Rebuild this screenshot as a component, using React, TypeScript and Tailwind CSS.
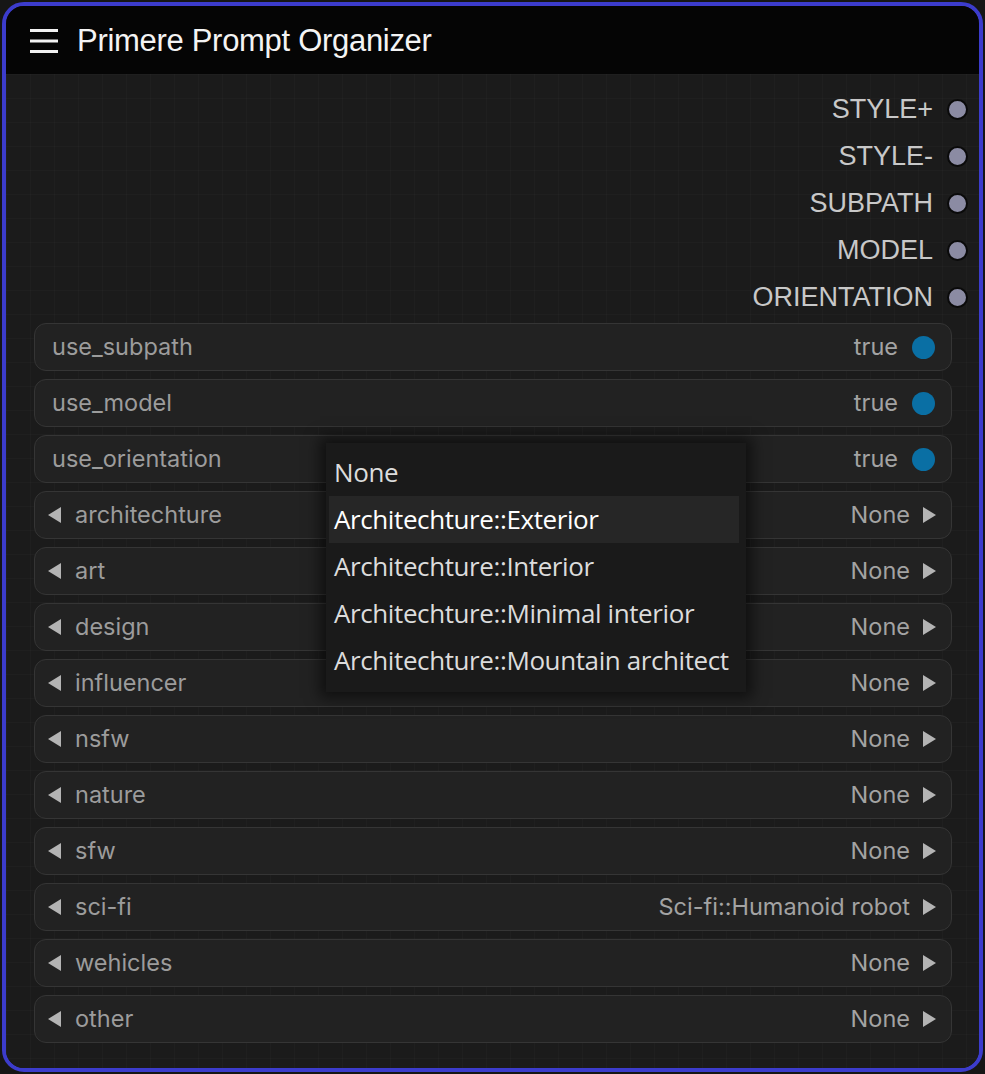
import React from 'react';

type Widget =
  | { kind: 'toggle'; name: string; value: string }
  | { kind: 'combo'; name: string; value: string };

const outputs = ['STYLE+', 'STYLE-', 'SUBPATH', 'MODEL', 'ORIENTATION'];

const widgets: Widget[] = [
  { kind: 'toggle', name: 'use_subpath', value: 'true' },
  { kind: 'toggle', name: 'use_model', value: 'true' },
  { kind: 'toggle', name: 'use_orientation', value: 'true' },
  { kind: 'combo', name: 'architechture', value: 'None' },
  { kind: 'combo', name: 'art', value: 'None' },
  { kind: 'combo', name: 'design', value: 'None' },
  { kind: 'combo', name: 'influencer', value: 'None' },
  { kind: 'combo', name: 'nsfw', value: 'None' },
  { kind: 'combo', name: 'nature', value: 'None' },
  { kind: 'combo', name: 'sfw', value: 'None' },
  { kind: 'combo', name: 'sci-fi', value: 'Sci-fi::Humanoid robot' },
  { kind: 'combo', name: 'wehicles', value: 'None' },
  { kind: 'combo', name: 'other', value: 'None' },
];

const menuItems = [
  'None',
  'Architechture::Exterior',
  'Architechture::Interior',
  'Architechture::Minimal interior',
  'Architechture::Mountain architect',
];

function Arrow({ dir }: { dir: 'left' | 'right' }) {
  return (
    <svg width="14" height="16" viewBox="0 0 14 16" className="shrink-0">
      {dir === 'left' ? (
        <polygon points="13,0 13,16 0,8" fill="#b4b4b4" />
      ) : (
        <polygon points="1,0 1,16 14,8" fill="#b4b4b4" />
      )}
    </svg>
  );
}

function WidgetRow({ w }: { w: Widget }) {
  return (
    <div className="h-[48px] rounded-[12px] border border-[#353535] bg-[#222222] flex items-center text-[23.5px] text-[#9c9c9c] font-['Inter',sans-serif]">
      {w.kind === 'toggle' ? (
        <>
          <span className="pl-[17px] flex-1">{w.name}</span>
          <span className="text-[#a3a3a3]">{w.value}</span>
          <span className="ml-[14px] mr-[16px] w-[23px] h-[23px] rounded-full bg-[#0a6fa4]" />
        </>
      ) : (
        <>
          <span className="pl-[13px] mr-[13px]">
            <Arrow dir="left" />
          </span>
          <span className="flex-1">{w.name}</span>
          <span className="text-[#a3a3a3]">{w.value}</span>
          <span className="ml-[12px] mr-[15px]">
            <Arrow dir="right" />
          </span>
        </>
      )}
    </div>
  );
}

export default function App() {
  return (
    <div className="w-[985px] h-[1074px] bg-[#161616] p-[2px]">
      <div className="relative h-full rounded-[22px] border-[4px] border-[#3c3ccc] bg-[#1b1b1b] overflow-hidden flex flex-col">
        {/* Title bar */}
        <div className="h-[68px] bg-[#050505] flex items-center pl-[24px] pt-[2px] shrink-0">
          <svg width="28" height="26" viewBox="0 0 28 26" className="mr-[19px]">
            <rect x="0" y="1" width="28" height="3" fill="#f2f2f2" />
            <rect x="0" y="11.5" width="28" height="3" fill="#f2f2f2" />
            <rect x="0" y="22" width="28" height="3" fill="#f2f2f2" />
          </svg>
          <span className="text-[31px] text-[#f4f4f4] font-['Liberation_Sans',Arial,sans-serif] tracking-[-0.3px]">
            Primere Prompt Organizer
          </span>
        </div>

        {/* Body */}
        <div className="flex-1 bg-[#1b1b1b] bg-[linear-gradient(to_right,rgba(255,255,255,0.018)_1px,transparent_1px),linear-gradient(to_bottom,rgba(255,255,255,0.018)_1px,transparent_1px)] bg-[size:24px_24px]">
          {/* Outputs */}
          <div className="flex flex-col items-end pt-[12px] pr-[11px]">
            {outputs.map((o) => (
              <div key={o} className="h-[47px] flex items-center">
                <span className="text-[27px] text-[#c8c8c8] font-['Liberation_Sans',Arial,sans-serif]">{o}</span>
                <span className="ml-[14px] w-[21px] h-[21px] rounded-full bg-[#8b8ba3] border-[2px] border-[#0a0a0a]" />
              </div>
            ))}
          </div>

          {/* Widgets */}
          <div className="flex flex-col gap-[8px] pl-[28px] pr-[27px] pt-[2px]">
            {widgets.map((w) => (
              <WidgetRow key={w.name} w={w} />
            ))}
          </div>
        </div>

        {/* Combo dropdown menu */}
        <div className="absolute left-[320px] top-[437px] w-[420px] pt-[6px] pb-[8px] pl-[3px] pr-[7px] bg-[#1a1a1a] shadow-[0_0_14px_6px_rgba(0,0,0,0.55)] font-['Open_Sans','Noto_Sans',sans-serif] text-[26px] text-[#dcdcdc]">
          {menuItems.map((m, i) => (
            <div
              key={m}
              className={`h-[47px] flex items-center pl-[5px] whitespace-nowrap tracking-[-0.4px] ${
                i === 1 ? 'bg-[#262626] text-white' : ''
              }`}
            >
              {m}
            </div>
          ))}
        </div>
      </div>
    </div>
  );
}
